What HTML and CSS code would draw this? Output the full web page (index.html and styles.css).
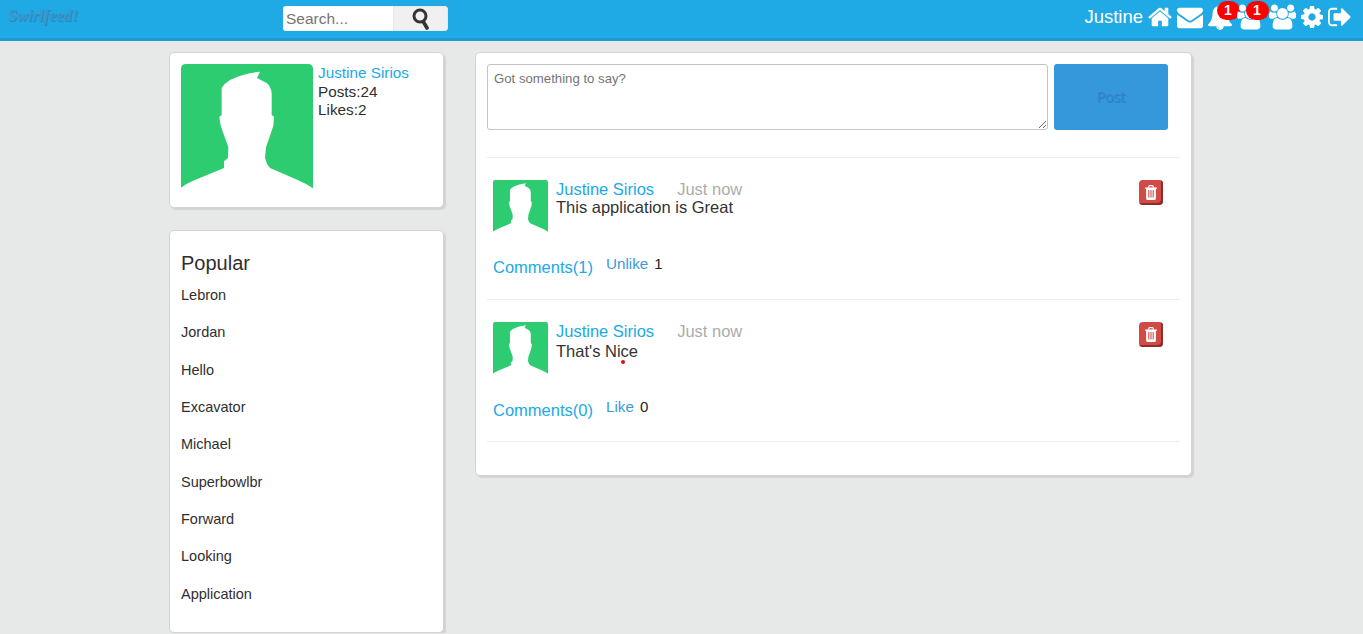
FILE: index.html
```html
<!DOCTYPE html>
<html lang="en">
<head>
    <meta charset="UTF-8">
    <title>Swirlfeed!</title>
    <meta name="viewport" content="width=device-width, initial-scale=1.0">
    <link rel="stylesheet" href="styles.css">
</head>
<body>
    <!-- shared drawings -->
    <svg class="defs" aria-hidden="true">
        <symbol id="avatar" viewBox="0 0 396 375" preserveAspectRatio="none">
            <path fill="#2ecc71" d="M15 0H381Q396 0 396 15V375H0V15Q0 0 15 0Z"/>
            <path fill="#fff" d="M237 23L228 42L257 57Q270 68 272 87V153L279 158L277 185L268 212L255 250L252 282L258 300L267 312L350 348Q378 360 396 373V375H0V371Q18 358 40 349L129 312V292L141 282L142 250L127 208L119 185L115 158L122 153V72Q130 58 147 48Q185 28 237 23Z"/>
        </symbol>
        <symbol id="trash" viewBox="192 128 1408 1536" preserveAspectRatio="none">
            <path d="M704 1376v-704q0-14-9-23t-23-9h-64q-14 0-23 9t-9 23v704q0 14 9 23t23 9h64q14 0 23-9t9-23zm256 0v-704q0-14-9-23t-23-9h-64q-14 0-23 9t-9 23v704q0 14 9 23t23 9h64q14 0 23-9t9-23zm256 0v-704q0-14-9-23t-23-9h-64q-14 0-23 9t-9 23v704q0 14 9 23t23 9h64q14 0 23-9t9-23zm-544-992h448l-48-117q-7-9-17-11h-317q-10 2-17 11zm928 32v64q0 14-9 23t-23 9h-96v948q0 83-47 143.500t-113 60.500h-832q-66 0-113-58.500t-47-141.500v-952h-96q-14 0-23-9t-9-23v-64q0-14 9-23t23-9h309l70-167q15-37 54-63t79-26h320q40 0 79 26t54 63l70 167h309q14 0 23 9t9 23z"/>
        </symbol>
        <symbol id="users" viewBox="0 0 1920 1792">
            <path d="M593 896q-162 5-265 128h-134q-82 0-138-40.500t-56-118.500q0-353 124-353 6 0 43.500 21t97.500 42.500 119 21.500q67 0 133-23-5 37-5 66 0 139 81 256zm1071 637q0 120-73 189.500t-194 69.500h-874q-121 0-194-69.500t-73-189.500q0-53 3.500-103.500t14-109 26.500-108.500 43-97.500 62-81 85.500-53.500 111.500-20q10 0 43 21.500t73 48 107 48 135 21.500 135-21.500 107-48 73-48 43-21.500q61 0 111.500 20t85.500 53.500 62 81 43 97.500 26.500 108.500 14 109 3.500 103.500zm-1024-1277q0 106-75 181t-181 75-181-75-75-181 75-181 181-75 181 75 75 181zm704 384q0 159-112.500 271.500t-271.500 112.500-271.500-112.500-112.500-271.500 112.500-271.500 271.500-112.500 271.500 112.500 112.500 271.500zm576 225q0 78-56 118.500t-138 40.500h-134q-103-123-265-128 81-117 81-256 0-29-5-66 66 23 133 23 59 0 119-21.500t97.500-42.500 43.500-21q124 0 124 353zm-128-609q0 106-75 181t-181 75-181-75-75-181 75-181 181-75 181 75 75 181z"/>
        </symbol>
    </svg>

    <header class="topbar">
        <a class="logo" href="#">Swirlfeed!</a>
        <form class="search">
            <input class="search-input" type="text" placeholder="Search...">
            <button class="search-btn" type="button" aria-label="Search">
                <svg viewBox="0 0 18 22" width="18" height="22">
                    <circle cx="8" cy="8" r="6" fill="none" stroke="#333" stroke-width="3"/>
                    <path d="M11.500 14l3.500 6" stroke="#333" stroke-width="3.600" stroke-linecap="round"/>
                </svg>
            </button>
        </form>
        <nav class="topnav">
            <a class="me" href="#">Justine</a>
            <a href="#"><svg class="ic" width="24" height="26" viewBox="64 0 1664 1792"><path d="M1472 992v480q0 26-19 45t-45 19h-384v-384h-256v384h-384q-26 0-45-19t-19-45v-480q0-1 .5-3t.5-3l575-474 575 474q1 2 1 6zm223-69l-62 74q-8 9-21 11h-3q-13 0-21-7l-692-577-692 577q-12 8-24 7-13-2-21-11l-62-74q-8-10-7-23.500t11-21.500l719-599q32-26 76-26t76 26l244 204v-195q0-14 9-23t23-9h192q14 0 23 9t9 23v408l219 182q10 8 11 21.500t-7 23.500z"/></svg></a>
            <a href="#"><svg class="ic" width="26" height="26" viewBox="0 0 1792 1792"><path d="M1792 710v794q0 66-47 113t-113 47h-1472q-66 0-113-47t-47-113v-794q44 49 101 87 362 246 497 345 57 42 92.500 65.500t94.500 48 110 24.500h2q51 0 110-24.500t94.500-48 92.500-65.500q170-123 498-345 57-39 100-87zm0-294q0 79-49 151t-122 123q-376 261-468 325-10 7-42.500 30.500t-54 38-52 32.500-57.500 27-50 9h-2q-23 0-50-9t-57.500-27-52-32.500-54-38-42.500-30.500q-91-64-262-182.500t-205-142.500q-62-42-117-115.500t-55-136.500q0-78 41.500-130t118.500-52h1472q65 0 112.500 47t47.500 113z"/></svg></a>
            <a class="has-badge" href="#">
                <svg class="ic" width="24" height="26" viewBox="64 0 1664 1792"><path d="M912 1696q0-16-16-16-59 0-101.500-42.500t-42.500-101.500q0-16-16-16t-16 16q0 73 51.500 124.500t124.500 51.500q16 0 16-16zm816-288q0 52-38 90t-90 38h-448q0 106-75 181t-181 75-181-75-75-181h-448q-52 0-90-38t-38-90q50-42 91-88t85-119.500 74.500-158.500 50-206 19.500-260q0-152 117-282.500t307-158.500q-8-19-8-39 0-40 28-68t68-28 68 28 28 68q0 20-8 39 190 28 307 158.500t117 282.500q0 139 19.500 260t50 206 74.500 158.500 85 119.500 91 88z"/></svg>
                <span class="badge">1</span>
            </a>
            <a class="has-badge" href="#">
                <svg class="ic" width="27" height="26"><use href="#users"/></svg>
                <span class="badge">1</span>
            </a>
            <a href="#"><svg class="ic" width="27" height="26"><use href="#users"/></svg></a>
            <a href="#"><svg class="ic" width="22" height="26" viewBox="128 0 1536 1792"><path d="M1152 896q0-106-75-181t-181-75-181 75-75 181 75 181 181 75 181-75 75-181zm512-109v222q0 12-8 23t-20 13l-185 28q-19 54-39 91 35 50 107 138 10 12 10 25t-9 23q-27 37-99 108t-94 71q-12 0-26-9l-138-108q-44 23-91 38-16 136-29 186-7 28-36 28h-222q-14 0-24.500-8.500t-11.500-21.500l-28-184q-49-16-90-37l-141 107q-10 9-25 9-14 0-25-11-126-114-165-168-7-10-7-23 0-12 8-23 15-21 51-66.500t54-70.500q-27-50-41-99l-183-27q-13-2-21-12.500t-8-23.500v-222q0-12 8-23t19-13l186-28q14-46 39-92-40-57-107-138-10-12-10-24 0-10 9-23 26-36 98.500-107.500t94.500-71.500q13 0 26 10l138 107q44-23 91-38 16-136 29-186 7-28 36-28h222q14 0 24.500 8.500t11.500 21.500l28 184q49 16 90 37l142-107q9-9 24-9 13 0 25 10 129 119 165 170 7 8 7 22 0 12-8 23-15 21-51 66.500t-54 70.500q26 50 41 98l183 28q13 2 21 12.500t8 23.500z"/></svg></a>
            <a href="#"><svg class="ic" width="23" height="26" viewBox="64 0 1600 1792"><path d="M704 1440q0 4 1 20t.5 26.500-3 23.500-10 19.500-20.500 6.500h-320q-119 0-203.500-84.500t-84.500-203.500v-704q0-119 84.500-203.500t203.500-84.500h320q13 0 22.500 9.500t9.500 22.500q0 4 1 20t.5 26.500-3 23.500-10 19.500-20.500 6.500h-320q-66 0-113 47t-47 113v704q0 66 47 113t113 47h312l11.500 1 11.500 3 8 5.500 7 9 2 13.500zm928-544q0 26-19 45l-544 544q-19 19-45 19t-45-19-19-45v-288h-448q-26 0-45-19t-19-45v-384q0-26 19-45t45-19h448v-288q0-26 19-45t45-19 45 19l544 544q19 19 19 45z"/></svg></a>
        </nav>
    </header>

    <div class="wrapper">
        <aside class="sidebar">
            <div class="card user-card">
                <svg class="user-pic"><use href="#avatar"/></svg>
                <div class="user-info">
                    <a class="user-name" href="#">Justine Sirios</a>
                    <div>Posts:24</div>
                    <div>Likes:2</div>
                </div>
            </div>
            <div class="card trends">
                <h4 class="trends-title">Popular</h4>
                <div class="trend">Lebron</div>
                <div class="trend">Jordan</div>
                <div class="trend">Hello</div>
                <div class="trend">Excavator</div>
                <div class="trend">Michael</div>
                <div class="trend">Superbowlbr</div>
                <div class="trend">Forward</div>
                <div class="trend">Looking</div>
                <div class="trend">Application</div>
            </div>
        </aside>

        <main class="card feed">
            <form class="composer">
                <textarea class="composer-text" placeholder="Got something to say?"></textarea>
                <button class="post-btn" type="button">Post</button>
            </form>

            <article class="post">
                <div class="post-head">
                    <svg class="post-pic"><use href="#avatar"/></svg>
                    <div class="post-body">
                        <div><a href="#">Justine Sirios</a><span class="post-time">Just now</span></div>
                        <div class="post-text">This application is Great</div>
                    </div>
                    <button class="del-btn" type="button" aria-label="Delete"><svg width="12" height="15"><use href="#trash"/></svg></button>
                </div>
                <div class="post-foot">
                    <a class="comments" href="#">Comments(1)</a>
                    <a class="like" href="#">Unlike</a>
                    <span class="like-count">1</span>
                </div>
            </article>

            <article class="post">
                <div class="post-head">
                    <svg class="post-pic"><use href="#avatar"/></svg>
                    <div class="post-body">
                        <div><a href="#">Justine Sirios</a><span class="post-time">Just now</span></div>
                        <div class="post-text">That's Nice<i class="red-dot"></i></div>
                    </div>
                    <button class="del-btn" type="button" aria-label="Delete"><svg width="12" height="15"><use href="#trash"/></svg></button>
                </div>
                <div class="post-foot">
                    <a class="comments" href="#">Comments(0)</a>
                    <a class="like" href="#">Like</a>
                    <span class="like-count">0</span>
                </div>
            </article>
        </main>
    </div>
</body>
</html>
```

FILE: styles.css
```css
* {
    box-sizing: border-box;
}

body {
    background-color: #e6e9e8;
    color: #2f2f2f;
    font-family: "Liberation Sans", Arial, sans-serif;
    margin: 0;
    padding: 0;
}

a {
    color: #20aae5;
    text-decoration: none;
}

.defs {
    display: none;
}

/* top bar */
.topbar {
    display: flex;
    align-items: flex-start;
    height: 41px;
    background-color: #20aae5;
    border-bottom: 3px solid #1c9bd1;
}

.logo {
    width: 283px;
    padding: 7px 0 0 8px;
    color: #3d97cc;
    font-family: "Liberation Serif", serif;
    font-style: italic;
    font-weight: bold;
    font-size: 16px;
    letter-spacing: 0.2px;
    text-shadow: 1px 1px 0 #2286bb;
}

.search {
    display: flex;
    margin-top: 6px;
    height: 25px;
}

.search-input {
    width: 110px;
    height: 25px;
    padding: 0 3px;
    border: none;
    border-radius: 3px 0 0 3px;
    font-family: inherit;
    font-size: 15.500px;
    color: #333;
}

.search-btn {
    display: flex;
    align-items: center;
    justify-content: center;
    width: 55px;
    height: 25px;
    padding: 0;
    border: 1px solid #e8e8e8;
    background-color: #f0f0f0;
    border-radius: 0 3px 3px 0;
}

.topnav {
    display: flex;
    align-items: flex-start;
    gap: 5px;
    margin-left: auto;
    padding: 4px 12px 0 0;
}

.topnav a {
    color: #fff;
    display: block;
}

.me {
    font-size: 18.500px;
    line-height: 26px;
}

.ic {
    display: block;
    fill: #fff;
}

.has-badge {
    position: relative;
}

.badge {
    position: absolute;
    top: -3px;
    left: 8.500px;
    width: 23px;
    height: 19px;
    border-radius: 10px;
    background-color: #f00;
    color: #fff;
    font-size: 14px;
    font-weight: bold;
    line-height: 19px;
    text-align: center;
}

/* columns */
.wrapper {
    display: flex;
    align-items: flex-start;
    gap: 31px;
    padding: 11px 0 0 169px;
}

.card {
    background-color: #fff;
    border: 1px solid #d3d3d3;
    border-radius: 5px;
    box-shadow: 2px 2px 1px #d3d3d3;
}

.sidebar {
    width: 275px;
    flex-shrink: 0;
}

.user-card {
    display: flex;
    gap: 5px;
    height: 156px;
    padding: 11px 10px 10px 11px;
}

.user-pic {
    width: 132px;
    height: 125px;
    flex-shrink: 0;
}

.user-info {
    font-size: 15.300px;
    line-height: 18px;
}

.user-name {
    display: block;
    margin-bottom: 1px;
}

.trends {
    height: 403px;
    margin-top: 22px;
    padding: 21px 11px 0;
}

.trends-title {
    margin: 0 0 7.900px;
    font-size: 20px;
    font-weight: normal;
    line-height: 22px;
}

.trend {
    height: 37.350px;
    font-size: 14.500px;
    line-height: 26px;
}

/* feed */
.feed {
    width: 717px;
    height: 424px;
    padding: 11px 11px 0;
}

.composer {
    display: flex;
    gap: 6px;
    margin-bottom: 27px;
}

.composer-text {
    width: 561px;
    height: 66px;
    padding: 6px;
    border: 1px solid #c4c4c4;
    border-radius: 3px;
    font-family: inherit;
    font-size: 13.200px;
}

.post-btn {
    width: 114px;
    height: 66px;
    padding: 0 0 2px;
    border: none;
    border-radius: 3px;
    background-color: #3498db;
    color: #3488cc;
    font-family: "Open Sans", sans-serif;
    font-size: 14px;
    text-shadow: 1px 1px 0 #2a7fc0;
}

.post {
    height: 142px;
    padding: 22px 6px 0;
    border-top: 1px solid #eee;
}

.post:last-child {
    height: 143px;
    border-bottom: 1px solid #eee;
}

.post-head {
    display: flex;
    gap: 8px;
    height: 52px;
}

.post-pic {
    width: 55px;
    height: 52px;
    flex-shrink: 0;
}

.post-body {
    flex: 1;
    font-size: 16.500px;
    line-height: 18px;
}

.post-time {
    margin-left: 23px;
    color: #acacac;
}

.post-text {
    position: relative;
    color: #333;
}

.post + .post .post-text {
    margin-top: 2px;
}

.red-dot {
    position: absolute;
    left: 65px;
    top: 18px;
    width: 4px;
    height: 4px;
    border-radius: 50%;
    background-color: #e01010;
}

.del-btn {
    display: flex;
    align-items: center;
    justify-content: center;
    width: 24px;
    height: 25px;
    margin-right: 11px;
    padding: 0 1px 1px 0;
    border: none;
    border-radius: 4px;
    background-color: #d24a46;
    box-shadow: inset -2px -2px 0 #8f2d2b;
}

.del-btn svg {
    fill: #fff;
}

.post-foot {
    display: flex;
    align-items: flex-start;
    margin-top: 25px;
}

.post + .post .post-foot {
    margin-top: 26px;
}

.comments {
    width: 113px;
    font-size: 16.500px;
    line-height: 20px;
}

.like {
    margin-top: -3px;
    color: #3d9ad9;
    font-size: 15.200px;
    line-height: 20px;
}

.like-count {
    margin: -3px 0 0 6px;
    color: #222;
    font-size: 15px;
    line-height: 20px;
}
```
